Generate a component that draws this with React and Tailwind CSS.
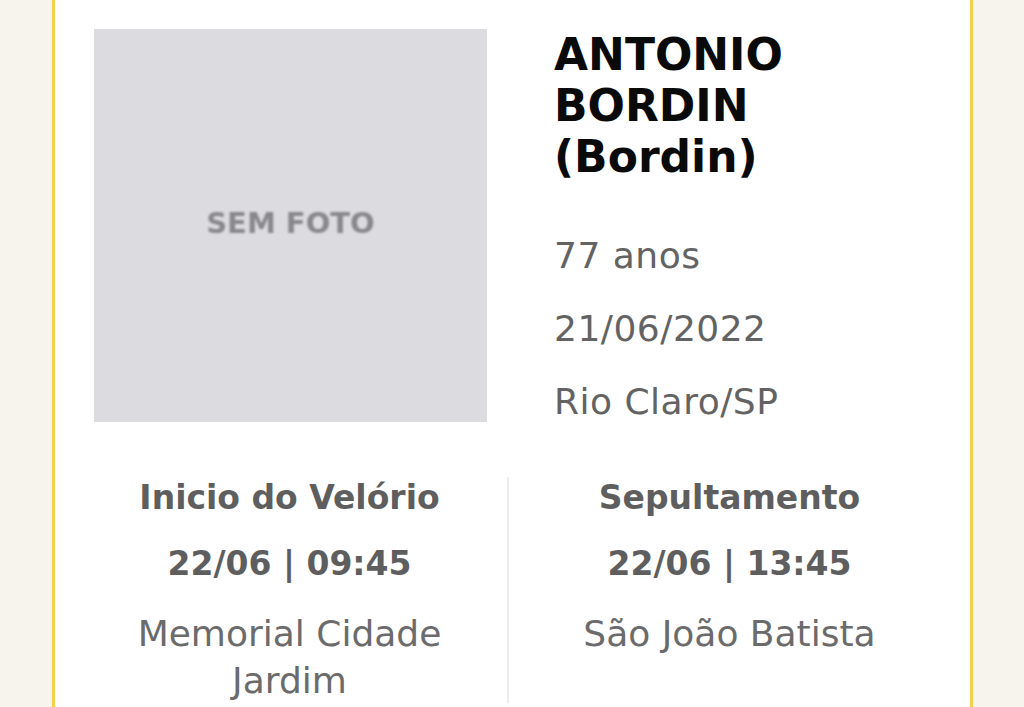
export default function App() {
  const font = { fontFamily: '"DejaVu Sans", sans-serif' };
  return (
    <div className="w-[1024px] h-[707px] overflow-hidden bg-[#f7f4ed]" style={font}>
      <div className="ml-[52px] w-[921px] h-[707px] bg-white border-x-[3px] border-[#f4d04c] pt-[28px]">
        <div className="flex">
          <div className="ml-[39px] mt-[1px] w-[393px] h-[393px] bg-[#dcdce0] flex items-center justify-center">
            <span className="text-[29px] font-bold text-[#88888c] blur-[1px] -mt-[4px]">SEM FOTO</span>
          </div>
          <div className="ml-[67px] flex flex-col">
            <div className="mt-[1px] text-[44px] leading-[51px] font-bold text-[#0a0a0a]">
              <div>ANTONIO</div>
              <div>BORDIN</div>
              <div>(Bordin)</div>
            </div>
            <div className="mt-[37px] text-[36px] leading-[73px] tracking-[0.5px] text-[#636363]">
              <div>77 anos</div>
              <div>21/06/2022</div>
              <div>Rio Claro/SP</div>
            </div>
          </div>
        </div>
        <div className="flex mt-[38px]">
          <div className="ml-[39px] w-[391px] flex flex-col items-center text-center">
            <div className="text-[33px] leading-[44px] font-bold text-[#5e5e5e]">Inicio do Velório</div>
            <div className="mt-[22px] text-[33px] leading-[44px] font-bold text-[#5e5e5e]">22/06 | 09:45</div>
            <div className="mt-[24px] text-[36px] leading-[47px] text-[#6b6b6b]">Memorial Cidade Jardim</div>
          </div>
          <div className="ml-[22px] mt-[1px] w-[2px] h-[226px] bg-[#ececec]"></div>
          <div className="w-[441px] flex flex-col items-center text-center">
            <div className="text-[33px] leading-[44px] font-bold text-[#5e5e5e]">Sepultamento</div>
            <div className="mt-[22px] text-[33px] leading-[44px] font-bold text-[#5e5e5e]">22/06 | 13:45</div>
            <div className="mt-[24px] text-[36px] leading-[47px] text-[#6b6b6b]">São João Batista</div>
          </div>
        </div>
      </div>
    </div>
  );
}
